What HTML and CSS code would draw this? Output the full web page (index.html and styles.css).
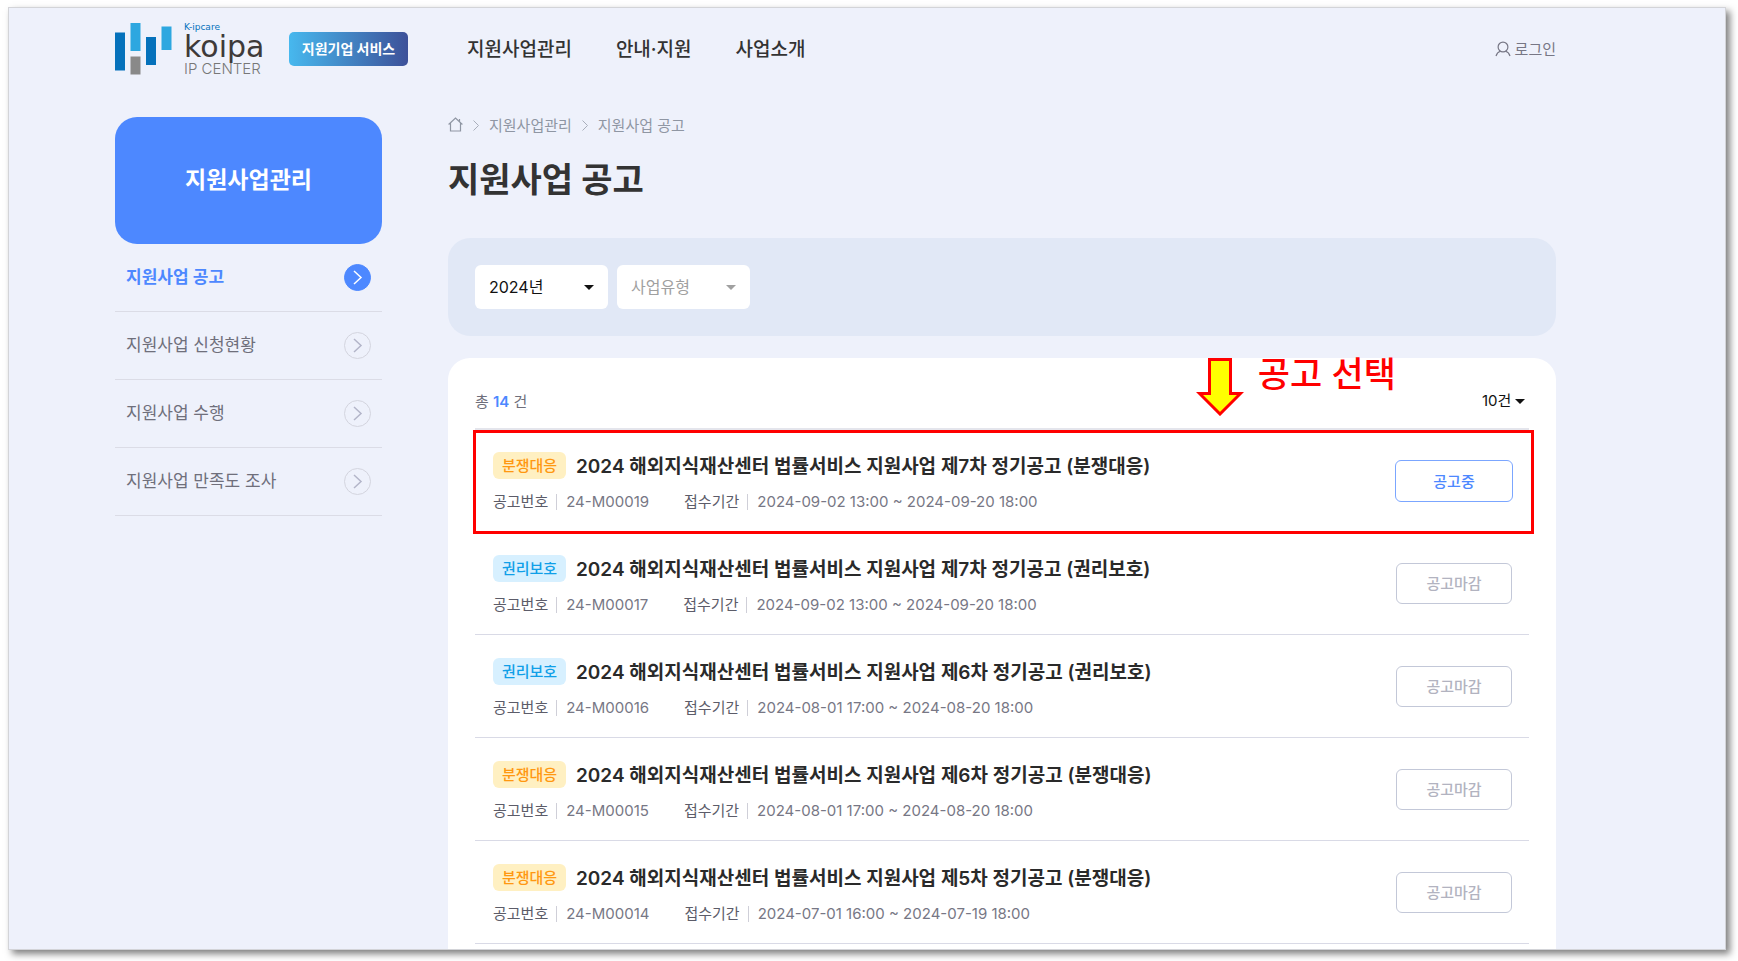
FILE: index.html
```html
<!DOCTYPE html>
<html lang="ko">
<head>
  <meta charset="UTF-8" />
  <meta name="viewport" content="width=device-width, initial-scale=1" />
  <title>지원사업 공고</title>
  <link rel="stylesheet" href="styles.css">
</head>
<body>
  <div class="page">

    <header>
      <a class="logo" href="#">
        <svg width="57" height="52" viewBox="0 0 57 52" aria-hidden="true">
          <rect x="0" y="9.500" width="10" height="38" fill="#0571bb"/>
          <rect x="15.500" y="0" width="10" height="28" fill="#2da7e0"/>
          <rect x="15.500" y="33.500" width="10" height="18" fill="#898989"/>
          <rect x="31" y="14" width="10" height="28" fill="#0571bb"/>
          <rect x="46.500" y="3.500" width="10" height="23.500" fill="#2da7e0"/>
        </svg>
        <span class="logo-text">
          <span class="logo-small">K-ipcare</span>
          <span class="logo-name">koipa</span>
          <span class="logo-sub">IP CENTER</span>
        </span>
      </a>
      <span class="service">지원기업 서비스</span>
      <nav>
        <a href="#">지원사업관리</a>
        <a href="#">안내·지원</a>
        <a href="#">사업소개</a>
      </nav>
      <a class="login" href="#">
        <svg width="16" height="16" viewBox="0 0 16 16" fill="none" stroke="#777785" stroke-width="1.200" aria-hidden="true">
          <circle cx="8" cy="6" r="4.900"/>
          <path d="M1 15c.8-2.400 2.300-4 4.300-4.700M15 15c-.8-2.400-2.300-4-4.300-4.700"/>
        </svg>
        <span>로그인</span>
      </a>
    </header>

    <div class="content">
      <aside>
        <h2>지원사업관리</h2>
        <ul class="menu">
          <li><a class="active" href="#"><span>지원사업 공고</span>
            <svg class="go" viewBox="0 0 27 27" aria-hidden="true"><circle cx="13.500" cy="13.500" r="13"/><path d="M10 7l7 6.500-7 6.500"/></svg></a></li>
          <li><a href="#"><span>지원사업 신청현황</span>
            <svg class="go" viewBox="0 0 27 27" aria-hidden="true"><circle cx="13.500" cy="13.500" r="13"/><path d="M10 7l7 6.500-7 6.500"/></svg></a></li>
          <li><a href="#"><span>지원사업 수행</span>
            <svg class="go" viewBox="0 0 27 27" aria-hidden="true"><circle cx="13.500" cy="13.500" r="13"/><path d="M10 7l7 6.500-7 6.500"/></svg></a></li>
          <li><a href="#"><span>지원사업 만족도 조사</span>
            <svg class="go" viewBox="0 0 27 27" aria-hidden="true"><circle cx="13.500" cy="13.500" r="13"/><path d="M10 7l7 6.500-7 6.500"/></svg></a></li>
        </ul>
      </aside>

      <main>
        <div class="breadcrumb">
          <a href="#" aria-label="홈">
            <svg width="15" height="15" viewBox="0 0 15 15" fill="none" stroke="#8f96a3" stroke-width="1.200" aria-hidden="true">
              <path d="M.6 7.500L7.500 1l6.900 6.500M2.500 6v8h10V6M11.500 4.500V2"/>
            </svg>
          </a>
          <svg width="6" height="11" viewBox="0 0 6 11" fill="none" stroke="#a9aebb" aria-hidden="true"><path d="M.5.5l5 5-5 5"/></svg>
          <a href="#">지원사업관리</a>
          <svg width="6" height="11" viewBox="0 0 6 11" fill="none" stroke="#a9aebb" aria-hidden="true"><path d="M.5.5l5 5-5 5"/></svg>
          <a href="#">지원사업 공고</a>
        </div>
        <h1>지원사업 공고</h1>

        <form class="filter">
          <div class="select-box">
            <select aria-label="연도"><option>2024년</option></select>
          </div>
          <div class="select-box empty">
            <select aria-label="사업유형"><option>사업유형</option></select>
          </div>
        </form>

        <section class="card">
          <div class="note">
            <svg width="48" height="58" viewBox="0 0 48 58" aria-hidden="true">
              <path d="M13.500 1.500h21v34h10L24 56 3.500 35.500h10z" fill="#ff0" stroke="#f00" stroke-width="3"/>
            </svg>
            <span>공고 선택</span>
          </div>

          <div class="toolbar">
            <p>총 <strong>14</strong> 건</p>
            <div class="select-box page-size">
              <select aria-label="목록 개수"><option>10건</option></select>
            </div>
          </div>

          <ul class="list">
            <li class="selected">
              <div class="info">
                <h3><span class="tag dispute">분쟁대응</span><a href="#">2024 해외지식재산센터 법률서비스 지원사업 제7차 정기공고 (분쟁대응)</a></h3>
                <dl>
                  <dt>공고번호</dt><dd>24-M00019</dd>
                  <dt>접수기간</dt><dd>2024-09-02 13:00 ~ 2024-09-20 18:00</dd>
                </dl>
              </div>
              <button type="button" class="open">공고중</button>
            </li>
            <li>
              <div class="info">
                <h3><span class="tag rights">권리보호</span><a href="#">2024 해외지식재산센터 법률서비스 지원사업 제7차 정기공고 (권리보호)</a></h3>
                <dl>
                  <dt>공고번호</dt><dd>24-M00017</dd>
                  <dt>접수기간</dt><dd>2024-09-02 13:00 ~ 2024-09-20 18:00</dd>
                </dl>
              </div>
              <button type="button">공고마감</button>
            </li>
            <li>
              <div class="info">
                <h3><span class="tag rights">권리보호</span><a href="#">2024 해외지식재산센터 법률서비스 지원사업 제6차 정기공고 (권리보호)</a></h3>
                <dl>
                  <dt>공고번호</dt><dd>24-M00016</dd>
                  <dt>접수기간</dt><dd>2024-08-01 17:00 ~ 2024-08-20 18:00</dd>
                </dl>
              </div>
              <button type="button">공고마감</button>
            </li>
            <li>
              <div class="info">
                <h3><span class="tag dispute">분쟁대응</span><a href="#">2024 해외지식재산센터 법률서비스 지원사업 제6차 정기공고 (분쟁대응)</a></h3>
                <dl>
                  <dt>공고번호</dt><dd>24-M00015</dd>
                  <dt>접수기간</dt><dd>2024-08-01 17:00 ~ 2024-08-20 18:00</dd>
                </dl>
              </div>
              <button type="button">공고마감</button>
            </li>
            <li>
              <div class="info">
                <h3><span class="tag dispute">분쟁대응</span><a href="#">2024 해외지식재산센터 법률서비스 지원사업 제5차 정기공고 (분쟁대응)</a></h3>
                <dl>
                  <dt>공고번호</dt><dd>24-M00014</dd>
                  <dt>접수기간</dt><dd>2024-07-01 16:00 ~ 2024-07-19 18:00</dd>
                </dl>
              </div>
              <button type="button">공고마감</button>
            </li>
          </ul>
        </section>
      </main>
    </div>

  </div>
</body>
</html>
```

FILE: styles.css
```css
* { box-sizing: border-box; }
body {
  margin: 0; padding: 7px 12px 11px 8px; height: 100vh;
  background: #fff; color: #333;
  font-family: Inter, "Noto Sans CJK KR", sans-serif; font-size: 15px;
}
h1, h2, h3, p, ul, dl, dd { margin: 0; padding: 0; }
ul { list-style: none; }
a { color: inherit; text-decoration: none; }
svg { flex: none; }
button, select { font-family: inherit; font-size: 15px; }

.page {
  height: 100%; overflow: hidden;
  padding: 0 169px 0 106px;
  background: #eef1fb; border: 1px solid #d3d4d8;
  box-shadow: 4px 4px 7px rgba(0,0,0,0.5);
}

/* header */
header { display: flex; align-items: center; height: 82px; }
.logo { display: flex; align-items: center; gap: 12px; width: 157px; }
.logo-text { display: flex; flex-direction: column; white-space: nowrap; }
.logo-small { font: 9px/12px "DejaVu Sans", sans-serif; color: #0571bb; }
.logo-name { font: 30px/27px "DejaVu Sans", sans-serif; color: #3e3a39; }
.logo-sub { font-size: 15px; line-height: 17px; font-weight: 300; color: #777; }
.service {
  margin-left: 17px; width: 119px; line-height: 34px; border-radius: 5px;
  background: linear-gradient(90deg, #47b8ee, #3d5199);
  color: #fff; font-size: 14px; font-weight: 700; text-align: center;
}
nav { display: flex; gap: 44px; margin-left: 59px; padding-bottom: 3px; font-size: 19px; font-weight: 500; }
.login {
  display: flex; align-items: center; gap: 4px;
  margin-left: auto; color: #777785;
}
.login span { padding-bottom: 2px; }

/* side menu */
.content { display: flex; gap: 66px; padding-top: 27px; }
aside { flex: none; width: 267px; }
aside h2 {
  line-height: 127px; border-radius: 22px;
  background: #4d88ff; color: #fff;
  font-size: 23px; font-weight: 700; text-align: center;
}
.menu a {
  display: flex; justify-content: space-between; align-items: center;
  height: 68px; padding: 0 11px; border-bottom: 1px solid #dbdce6;
  font-size: 17px; color: #6f6f7b;
}
.menu span { padding-bottom: 4px; }
.menu .active { color: #4d88ff; font-weight: 600; }
.go { width: 27px; height: 27px; fill: none; stroke: #d3d4de; }
.go path { stroke: #b3b5c9; stroke-width: 1.5; }
.active .go circle { fill: #4d88ff; stroke: #4d88ff; }
.active .go path { stroke: #fff; }

/* main */
main { flex: 1; min-width: 0; }
.breadcrumb {
  display: flex; align-items: center; gap: 10px;
  height: 16px; color: #8f96a3;
}
.breadcrumb a { display: flex; padding-bottom: 2px; }
h1 { margin: 23px 0 34px; font-size: 34px; line-height: 48px; font-weight: 700; }
.filter {
  display: flex; gap: 9px; padding: 27px; margin-bottom: 22px;
  background: #e1e8f6; border-radius: 22px;
}
.select-box { position: relative; width: 133px; color: #111; }
.select-box::after {
  content: ""; position: absolute; right: 14px; top: 20px;
  border: 5px solid transparent; border-top-color: currentColor; border-bottom: 0;
}
.select-box select {
  appearance: none; width: 100%; height: 44px; padding: 0 14px;
  border: 0; border-radius: 6px; background: #fff;
  color: inherit; font-size: 16px;
}
.empty { color: #a0a0a0; }

.card {
  position: relative; padding: 27px 27px 60px;
  background: #fff; border-radius: 22px;
}
.toolbar { display: flex; justify-content: space-between; align-items: center; height: 43px; padding-bottom: 12px; color: #6f6f7b; }
.toolbar strong { color: #4d88ff; font-weight: 600; }
.page-size { width: 47px; }
.page-size select { height: 31px; padding: 0; font-size: 15px; }
.page-size::after { right: 4px; top: 14px; }

/* notices */
.list { border-top: 2px solid #e4e5ec; }
.list li {
  position: relative; display: flex; justify-content: space-between; align-items: flex-start;
  padding: 22px 17px 17px 18px; border-bottom: 1px solid #d9dae6;
}
.list li + li { padding-top: 23px; }
.list h3 { display: flex; align-items: center; gap: 10px; font-size: 19px; line-height: 27px; font-weight: 600; color: #2a2a2a; }
.list h3 a { padding-top: 1px; margin-bottom: -1px; }
.tag { width: 73px; border-radius: 6px; font-size: 15px; font-weight: 500; text-align: center; }
.dispute { background: #fff0c2; color: #ff9811; }
.rights { background: #d7f0ff; color: #109fe8; }
.list dl { display: flex; align-items: center; margin-top: 11px; line-height: 24px; color: #777785; }
.list dt { color: #5c5c69; }
.list dd { display: flex; align-items: center; margin-right: 35px; }
.list dd::before { content: ""; height: 16px; margin: 0 9px 0 8px; border-left: 1px solid #cfcfd8; }
.list button {
  width: 116px; height: 41px; margin-top: 8px; padding: 0 0 2px;
  border: 1px solid #c3c8d8; border-radius: 6px; background: #fff;
  color: #b2b3c0; font-weight: 500;
}
.list .open { width: 118px; height: 42px; margin-right: -1px; border-color: #7ba6ff; color: #4d88ff; }

/* red guide marks over the first notice */
.selected::after {
  content: ""; position: absolute; top: 0; right: -5px; bottom: -3px; left: -2px;
  border: 3px solid #f00; pointer-events: none;
}
.note {
  position: absolute; top: 0; right: 160px;
  display: flex; gap: 14px;
  color: #f00; font-size: 35px; line-height: 32px; font-weight: 500;
}
```
